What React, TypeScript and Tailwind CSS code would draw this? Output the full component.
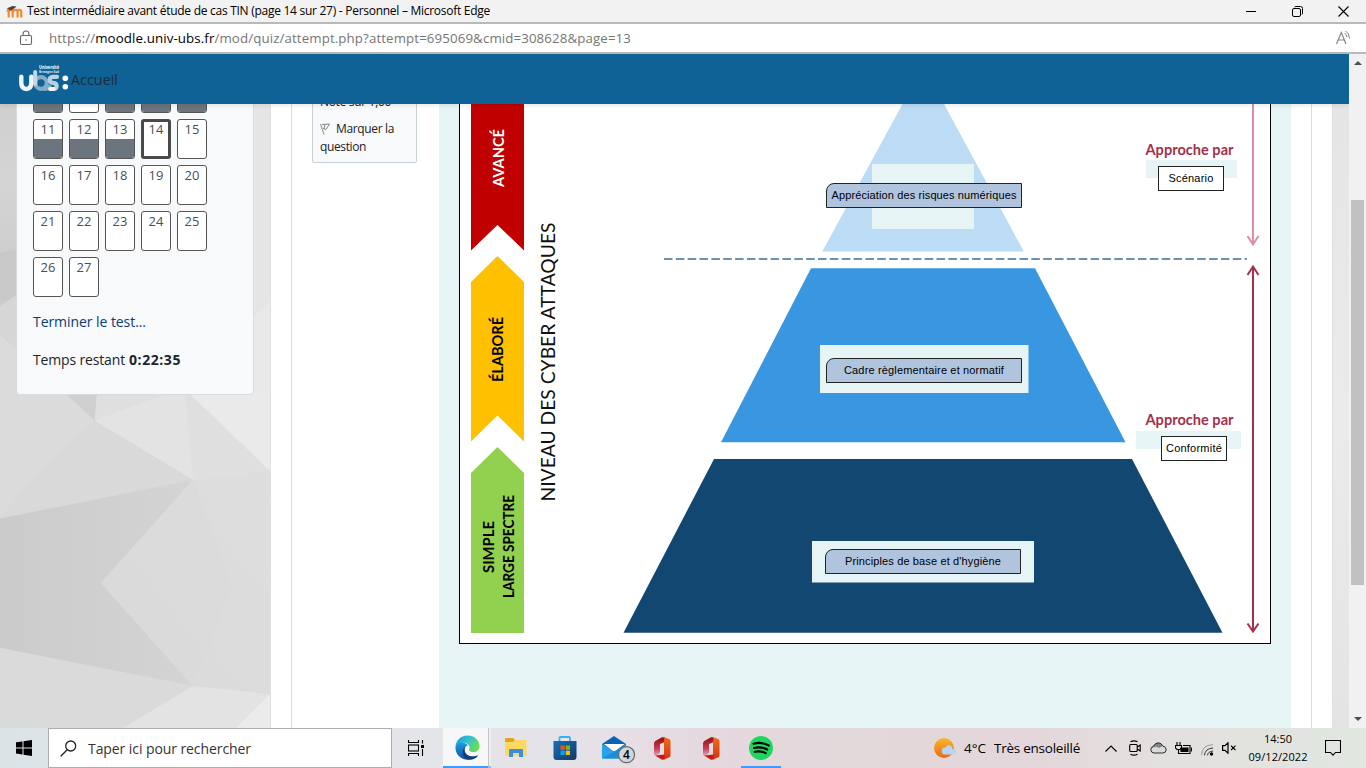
import React, { useLayoutEffect, useRef } from 'react';

const sans = "font-['Open_Sans','Noto_Sans',sans-serif]";

/** One line of text whose tracking is adjusted so that it spans `width` pixels. */
function FitText({ width, className = '', children }: { width: number; className?: string; children: React.ReactNode }) {
  const ref = useRef<HTMLSpanElement>(null);
  useLayoutEffect(() => {
    const el = ref.current;
    if (!el) return;
    el.style.letterSpacing = '0px';
    const natural = el.getBoundingClientRect().width;
    const count = (el.textContent || '').length;
    el.style.letterSpacing = `${(width - natural) / count}px`;
  }, [width]);
  return (
    <span ref={ref} className={`inline-block whitespace-nowrap ${className}`}>
      {children}
    </span>
  );
}

function TitleBar() {
  return (
    <div className="flex h-[22px] items-center bg-[#f2f2f2] pl-[6px] text-black">
      <svg width="17" height="14" viewBox="0 0 17 14" className="mt-px">
        <path d="M3 13V7.500q0-2 2-2t2 2V13M7.500 7.500q0-2 2.200-2t2.200 2V13M11.800 7.500q0-2 1.900-2t1.900 2V13" transform="translate(-.3 -.6)" fill="none" stroke="#f08a2c" strokeWidth="2.200" />
        <path d="M1 3.200L6.500 1l4 .4-3.500 3.200-3 1z" fill="#4a4542" />
        <path d="M1.500 3.500L1 7" stroke="#8b7a6b" strokeWidth=".8" />
      </svg>
      <FitText width={463} className="ml-[4px] text-[12px] leading-[22px]">
        Test intermédiaire avant étude de cas TIN (page 14 sur 27) - Personnel – Microsoft Edge
      </FitText>
      <div className="ml-auto flex items-center pr-[17px]">
        <svg width="10" height="10" viewBox="0 0 10 10"><path d="M0 5.500h10" stroke="#000" /></svg>
        <svg width="11" height="11" viewBox="0 0 11 11" className="ml-[36px]" fill="none" stroke="#000">
          <rect x=".5" y="2.500" width="8" height="8" rx="1.500" />
          <path d="M2.500 1Q3 .5 4 .5h4.500q2 0 2 2V7q0 1-.5 1.500" />
        </svg>
        <svg width="11" height="11" viewBox="0 0 11 11" className="ml-[35px]"><path d="M.5.5l10 10M10.500.5l-10 10" stroke="#000" strokeWidth="1.100" /></svg>
      </div>
    </div>
  );
}

function AddressBar() {
  return (
    <div className="flex h-[32px] items-center border-y-2 border-y-[#b9b9b9] bg-white pl-[19px]">
      <svg width="14" height="16" viewBox="0 0 14 16" fill="none" stroke="#666" strokeWidth="1.100">
        <rect x="1.500" y="5.500" width="11" height="9" rx="1.500" />
        <path d="M4 5.500V4a3 3 0 016 0v1.500" />
        <circle cx="7" cy="10" r=".7" fill="#555" stroke="none" />
      </svg>
      <div className="ml-[16px] text-[13.300px] leading-[28px] text-[#767676]">
        <FitText width={582}>
          https://<span className="text-black">moodle.univ-ubs.fr</span>/mod/quiz/attempt.php?attempt=695069&amp;cmid=308628&amp;page=13
        </FitText>
      </div>
      <svg width="17" height="16" viewBox="0 0 17 16" className="ml-auto mr-[14px]" fill="none" stroke="#858585">
        <path d="M1.500 14L6.300 2.500 11 14M3.200 10h6.200" strokeWidth="1.200" />
        <path d="M9.500 3q2 1.300 2.300 4M10.500 1q3.700 2 4 7.500" />
      </svg>
    </div>
  );
}

function NavBar() {
  return (
    <div className="relative z-10 flex h-[50px] items-center bg-[#0f6295] pl-[18px] shadow-[0_2px_4px_rgba(0,0,0,0.08)]">
      <svg width="51" height="30" viewBox="18 64 51 30" fill="none" strokeLinecap="round">
        <path d="M49.500 86.500q-1.500 2.500-5 2.500" stroke="#82adc9" strokeWidth="4" />
        <circle cx="41" cy="83" r="5.800" stroke="#82adc9" strokeWidth="4.200" />
        <path d="M57 76.800h-4q-3.300.3-3.300 3t3.300 3.100q3.600.3 3.600 3.100T53.500 89H50" stroke="#b9d2e2" strokeWidth="4.200" />
        <path d="M53.500 89H50.500" stroke="#f3f7fa" strokeWidth="4" />
        <path d="M35.200 72v12" stroke="#c3d8e5" strokeWidth="4" />
        <path d="M21.300 76.800v6.400q.3 5.600 5 5.800 4.800-.2 5-5.800v-6.400" stroke="#eef4f8" strokeWidth="4.400" />
        <circle cx="65.300" cy="78.300" r="2.800" fill="#fff" />
        <circle cx="65.300" cy="86.700" r="2.800" fill="#fff" />
        <text x="39" y="69.300" textLength="20" lengthAdjust="spacingAndGlyphs" fontSize="5" fontWeight="700" fill="#fff" fontFamily="Open Sans">Université</text>
        <text x="39" y="72.600" textLength="20" lengthAdjust="spacingAndGlyphs" fontSize="3.500" fontWeight="700" fill="#dce9f1" fontFamily="Open Sans">Bretagne Sud</text>
      </svg>
      <FitText width={47} className="ml-[2px] pt-px text-[14.300px] text-[#1d2b36]">Accueil</FitText>
    </div>
  );
}

function PolygonBackdrop() {
  return (
    <svg width="270" height="624" viewBox="0 104 270 624" className="absolute left-0 top-0">
      <defs>
        <linearGradient id="dark" x1="0" y1="0" x2="1" y2="0"><stop stopColor="#cbcbcb" /><stop offset="1" stopColor="#d4d4d4" /></linearGradient>
        <linearGradient id="strip" x1="0" y1="0" x2="0" y2="1"><stop stopColor="#cfcfcf" /><stop offset=".5" stopColor="#d5d5d5" /><stop offset="1" stopColor="#cecece" /></linearGradient>
        <linearGradient id="light" x1="0" y1="1" x2="1" y2="0"><stop stopColor="#dadada" /><stop offset="1" stopColor="#dedede" /></linearGradient>
      </defs>
      <rect y="104" width="270" height="624" fill="#dbdbdb" />
      <path d="M0 104h60v149H0z" fill="url(#strip)" />
      <path d="M0 253l17-4v46L0 306z" fill="#c9c9c9" />
      <path d="M0 306l17-11v55L0 335z" fill="#d6d6d6" />
      <path d="M240 104h30v197l-30 28z" fill="#e5e5e5" />
      <path d="M240 329l30-28v93h-30z" fill="#e9e9e9" />
      <path d="M66 394h31l-2 27z" fill="#d0d0d0" />
      <path d="M97 394h95l78 77-77 9-98-59z" fill="#e3e3e3" />
      <path d="M97 394h70l-45 16-27 11z" fill="#dfdfdf" />
      <path d="M185 394h7l78 77-77 9z" fill="#dfdfdf" />
      <path d="M190 394h80v77z" fill="#eaeaea" />
      <path d="M95 421l98 59L0 518.500l35-43z" fill="#d9d9d9" />
      <path d="M0 518.500L193 480l-92 103 92 103L0 648z" fill="url(#dark)" />
      <path d="M193 480l77-9v223l-77-8-92-103z" fill="url(#light)" />
      <path d="M193 480l39 105-39 101-92-103z" fill="#d9d9d9" opacity=".5" />
      <path d="M0 648l193 38-70 42H0z" fill="#dadada" />
      <path d="M193 686l77 8v34H123z" fill="#e3e3e3" />
      <path d="M270 694v34h-34z" fill="#ebebeb" />
    </svg>
  );
}

function QuizButton({ n }: { n: number }) {
  const answered = n <= 13 && n !== 7;
  const current = n === 14;
  return (
    <div
      className={`flex h-[40px] w-[30px] flex-col overflow-hidden rounded-[3px] bg-white ${
        current ? 'border-[3px] border-[#4a4a4a]' : 'border border-[#555]'
      }`}
    >
      <div className={`flex h-[19px] shrink-0 justify-center text-[13px] leading-[19px] text-[#495057] ${current ? '-mt-[2px]' : ''}`}>
        {n > 10 && <FitText width={15}>{n}</FitText>}
      </div>
      {answered && <div className="flex-1 bg-[#6c757d]" />}
    </div>
  );
}

function Sidebar() {
  const numbers = Array.from({ length: 22 }, (_, i) => i + 6);
  return (
    <aside className="relative w-[271px] shrink-0 border-r border-[#dcdedf]">
      <PolygonBackdrop />
      <div className="relative -mt-[40px] ml-[16px] h-[331px] w-[238px] rounded-[4px] border border-[#d9dcdf] bg-[#f8f9fb] pl-[16px] pt-[8px]">
        <div className="grid grid-cols-[repeat(5,30px)] gap-[6px]">
          {numbers.map((n) => <QuizButton key={n} n={n} />)}
        </div>
        <div className="mt-[14px] text-[14px] leading-[22px] text-[#0c3b78]"><FitText width={113}>Terminer le test...</FitText></div>
        <div className="mt-[16px] flex text-[14px] leading-[22px] text-[#212529]">
          <FitText width={92}>Temps restant</FitText>
          <FitText width={52} className="ml-[4px] font-bold">0:22:35</FitText>
        </div>
      </div>
    </aside>
  );
}

function Diagram() {
  const label = { fontFamily: 'Lato, sans-serif', fontWeight: 700, lengthAdjust: 'spacingAndGlyphs' as const };
  return (
    <svg width="810" height="539" viewBox="460 104 810 539" className="block">
      <path d="M471 100h53v150.500L497.500 225 471 250.500z" fill="#c00000" />
      <path d="M497.500 256L524 282v159.500l-26.500-26-26.500 26V282z" fill="#ffc000" />
      <path d="M497.500 447L524 473v160h-53V473z" fill="#92d050" />
      <text {...label} transform="translate(503.500 187) rotate(-90)" textLength="58" fontSize="14.500" fill="#fff">AVANCÉ</text>
      <text {...label} transform="translate(503.200 382) rotate(-90)" textLength="65" fontSize="14.500">ÉLABORÉ</text>
      <text {...label} transform="translate(493.700 573) rotate(-90)" textLength="52" fontSize="15">SIMPLE</text>
      <text {...label} transform="translate(513.700 598) rotate(-90)" textLength="103" fontSize="14.500">LARGE SPECTRE</text>
      <text {...label} fontWeight={400} transform="translate(555 501.500) rotate(-90)" textLength="279" fontSize="20" fill="#111">NIVEAU DES CYBER ATTAQUES</text>

      <path d="M902.500 104h41.500L1023.800 251.500H822.300z" fill="#bcdcf5" />
      <path d="M811 268.300h224l90.500 174H721z" fill="#3996e1" />
      <path d="M714 459h418l90.500 173.700h-599z" fill="#124772" />
      <path d="M664 259h583" stroke="#6c91b1" strokeWidth="2" strokeDasharray="8.500 3.350" />

      <g fill="#e6f4f6">
        <path d="M872 164h102v65H872zM820 345h208.500v48H820zM812 541h222v41.500H812zM1146 160h91v18h-91zM1136 431h105v18h-105z" />
      </g>
      <g fill="none" strokeWidth="2">
        <path d="M1253 104v140M1247.500 236l5.500 8.500 5.500-8.500" stroke="#dc90a2" />
        <path d="M1253 267v364M1247.500 275l5.500-8.500 5.500 8.500M1247.500 623.500l5.500 8 5.500-8" stroke="#a5304c" />
      </g>
      <text {...label} x="1145.500" y="155" textLength="88" fontSize="14.500" fill="#a5304c">Approche par</text>
      <text {...label} x="1145.500" y="425" textLength="88" fontSize="14.500" fill="#a5304c">Approche par</text>
    </svg>
  );
}

const chip = "absolute flex h-[25px] items-center justify-center border border-[#222] font-['Liberation_Sans',sans-serif] text-[11px] leading-none text-black";

function DropCanvas() {
  return (
    <div className="relative h-[540px] w-[812px] border-x border-b border-black bg-white">
      <Diagram />
      <div className={`${chip} left-[366px] top-[79px] w-[196px] rounded-tl-[8px] bg-[#b0c4de]`}><FitText width={185}>Appréciation des risques numériques</FitText></div>
      <div className={`${chip} left-[366px] top-[254px] w-[196px] rounded-tl-[8px] bg-[#b0c4de]`}><FitText width={160}>Cadre règlementaire et normatif</FitText></div>
      <div className={`${chip} left-[365px] top-[445px] w-[196px] rounded-tl-[8px] bg-[#b0c4de]`}><FitText width={156}>Principles de base et d'hygiène</FitText></div>
      <div className={`${chip} left-[698px] top-[62px] w-[66px] bg-white`}><FitText width={45}>Scénario</FitText></div>
      <div className={`${chip} left-[701px] top-[332px] w-[66px] bg-white`}><FitText width={56}>Conformité</FitText></div>
    </div>
  );
}

function QuestionInfo() {
  return (
    <div className="-mt-[20px] ml-[20px] h-[79px] w-[105px] shrink-0 rounded-[2px] border border-[#cad0d7] bg-[#f8f9fa] pl-[7px] pt-[8px] text-[12px] leading-[18px] text-[#1d2125]">
      <div><FitText width={71}>Note sur 1,00</FitText></div>
      <div className="mt-[9px] flex items-center">
        <svg width="10" height="12" viewBox="0 0 10 12" fill="none" stroke="#888" className="mr-[6px]"><path d="M.5 1l3.500 10.500M2 1.500l7.500-.5L6 6.500l-3-1M5 1.200L4 6" /></svg>
        <FitText width={58}>Marquer la</FitText>
      </div>
      <FitText width={46}>question</FitText>
    </div>
  );
}

function ScrollBar() {
  return (
    <div className="flex w-[17px] shrink-0 flex-col items-center bg-[#f1f1f1]">
      <svg width="8" height="4" viewBox="0 0 8 4" className="mt-[7px]"><path d="M0 4l4-4 4 4z" fill="#505050" /></svg>
      <div className="mt-[135px] h-[385px] w-[13px] bg-[#c1c1c1]" />
      <svg width="8" height="4" viewBox="0 0 8 4" className="mb-[7px] mt-auto"><path d="M0 0l4 4 4-4z" fill="#505050" /></svg>
    </div>
  );
}

function OfficeIcon() {
  return (
    <svg width="18" height="23" viewBox="0 0 18 23">
      <defs>
        <linearGradient id="of1" x1="0" y1="0" x2="0" y2="1"><stop stopColor="#8f1010" /><stop offset=".6" stopColor="#c53b50" /><stop offset="1" stopColor="#e6a0ba" /></linearGradient>
        <linearGradient id="of2" x1="0" y1="0" x2="0" y2="1"><stop stopColor="#ef6c1a" /><stop offset="1" stopColor="#d8320f" /></linearGradient>
      </defs>
      <path d="M1 6.500Q1 5 2.300 4L9 .3l3 .2v4.500L7 7v8q0 1.500-1.500 2.300L2 18.500Q1 18 1 16.500z" fill="url(#of1)" />
      <path d="M11.500.3L16 2q1.500.5 1.500 2v14.500q0 1.500-1.500 2L11 22.500V4.500z" fill="url(#of2)" />
      <path d="M2 18.500l9.500-1v5L9 22.700z" fill="#c71b12" />
    </svg>
  );
}

function EdgeIcon() {
  return (
    <svg width="25" height="25" viewBox="0 0 25 25">
      <defs>
        <linearGradient id="eg" x1="0" y1="0" x2="1" y2=".4"><stop stopColor="#1b96df" /><stop offset=".55" stopColor="#35bfcf" /><stop offset="1" stopColor="#66dc5a" /></linearGradient>
        <linearGradient id="eb" x1="0" y1="0" x2="0" y2="1"><stop stopColor="#1e9be0" /><stop offset="1" stopColor="#0b55a6" /></linearGradient>
      </defs>
      <path d="M.5 12.500C.5 5.500 5.500.5 12.500.5s12 5 12 10.500c0 4-3 6-6 6-4 0-5-2-4-3.500C15.500 9 9 6 4.500 9 2 10.500.5 12.500.5 12.500z" fill="url(#eg)" />
      <path d="M.5 12.500C1.500 8 6 6.500 9.500 8c2.500 1 3.500 2.500 3.500 2.500-3 .5-4 3-3.500 5.500C10.500 20.500 15 22 19 21.500c2 0 3.500-1 4-1-2.500 3.500-6.500 4.200-10 4.200C5.500 24.700.3 19 .5 12.500z" fill="url(#eb)" />
      <path d="M10.500 11.500c-2.500 4.500.5 10 7 10 2.500 0 5-1.300 5.500-1-2.500 3.500-7 4.500-10 4-6-1-7.500-9.500-2.500-13z" fill="#103f7d" />
    </svg>
  );
}

function TaskBar() {
  return (
    <footer className="flex h-[40px] items-center bg-[linear-gradient(90deg,#dce3e7_0%,#e4e6e9_33%,#e5e2e7_43%,#e5d8df_52%,#e3d8da_63%,#e4d6da_75%,#e3dfde_84%,#e1e7e1_100%)] text-black">
      <svg width="16" height="16" viewBox="0 0 16 16" className="ml-[16px]"><path d="M0 2.300l6.500-.9v6H0zM7.500 1.200L16 0v7.400H7.500zM0 8.400h6.500v6.100L0 13.600zM7.500 8.400H16V16l-8.500-1.200z" /></svg>
      <div className="ml-[16px] flex h-[40px] w-[344px] items-center border border-[#a9adb0] bg-white pl-[11px]">
        <svg width="17" height="17" viewBox="0 0 17 17" fill="none" stroke="#222" strokeWidth="1.300"><circle cx="10.700" cy="6" r="5" /><path d="M7.200 9.700L.7 16.200" /></svg>
        <FitText width={163} className="ml-[11px] text-[14px] text-[#333]">Taper ici pour rechercher</FitText>
      </div>
      <svg width="16" height="16" viewBox="0 0 16 16" className="ml-[16px]" fill="none" stroke="#000" strokeWidth="1.100">
        <path d="M.5 0v2.500h10V0M.5 16v-2.500h10V16M14.500 0v3.500M14.500 9v7" /><rect x=".5" y="5" width="10" height="6" /><path d="M13 6.500h3" strokeWidth="3" />
      </svg>
      <div className="ml-[19px] flex h-[40px] w-[48px] shrink-0">
        <div className="flex w-[45px] items-center justify-center border-b-2 border-[#3f9bfd] bg-[#f7f7f8]"><div className="ml-[3px]"><EdgeIcon /></div></div>
        <div className="w-[3px] border-b-2 border-l border-b-[#7ebcfa] border-l-[#c5c5c8] bg-[#eeeef0]" />
      </div>
      <svg width="22" height="20" viewBox="0 0 22 20" className="ml-[14px]">
        <path d="M0 1q0-1 1-1h7l2 2h11v15H0z" fill="#e0a51d" /><path d="M0 4h8l2-2h11.500v16H0z" fill="#ffd864" /><path d="M4 19v-7q0-1 1-1h12q1 0 1 1v7h-4v-4H8v4z" fill="#3d8fd9" />
      </svg>
      <svg width="24" height="24" viewBox="0 0 24 24" className="ml-[26px]">
        <defs><linearGradient id="st" x1="0" y1="0" x2="1" y2="1"><stop stopColor="#1270bb" /><stop offset="1" stopColor="#183863" /></linearGradient></defs>
        <path d="M6.500 6V2q0-1 1-1h8.500q1 0 1 1v4" fill="none" stroke="#36b3ec" strokeWidth="1.800" />
        <path d="M.5 5h23v16q0 3-3 3h-17q-3 0-3-3z" fill="url(#st)" />
        <path d="M7.500 9.500h4.300v4.300H7.500z" fill="#f25022" /><path d="M12.700 9.500H17v4.300h-4.300z" fill="#7fba00" /><path d="M7.500 14.700h4.300V19H7.500z" fill="#00a4ef" /><path d="M12.700 14.700H17V19h-4.300z" fill="#ffb900" />
      </svg>
      <svg width="33" height="28" viewBox="0 0 33 28" className="ml-[25px] mt-[4px] shrink-0">
        <path d="M0 8L12 0l12 8v14H0z" fill="#0b63b5" /><path d="M2 8h20l-9.500 7z" fill="#fff" /><path d="M0 8l12 7 12-7v14.500H0z" fill="#29a3e8" /><path d="M2 8h20.500L13 15h-2z" fill="#fff" /><path d="M0 22.500L24 9v13.500z" fill="#1a8edb" />
        <circle cx="24.500" cy="18.700" r="8" fill="#d1d7da" stroke="#666" strokeWidth="1.200" />
        <text x="24.500" y="23" textAnchor="middle" fontSize="12" fontWeight="600" fontFamily="Open Sans">4</text>
      </svg>
      <div className="ml-[18px]"><OfficeIcon /></div>
      <div className="ml-[31px]"><OfficeIcon /></div>
      <div className="ml-[21px] flex h-[40px] w-[40px] items-center justify-center border-b-2 border-[#3f9bfd] pt-[2px]">
        <svg width="24" height="24" viewBox="0 0 24 24"><circle cx="12" cy="12" r="12" fill="#1ed760" /><path d="M4.500 7.800q8-2.300 15.300 1.700M5 12q7-2 13.200 1.500M5.700 15.800q6-1.500 11 1.400" fill="none" stroke="#000" strokeWidth="2.200" strokeLinecap="round" /></svg>
      </div>
      <svg width="24" height="22" viewBox="0 0 24 22" className="ml-auto shrink-0">
        <defs><linearGradient id="sun" x1="0" y1="0" x2="0" y2="1"><stop stopColor="#f6b92c" /><stop offset="1" stopColor="#ed6a13" /></linearGradient></defs>
        <circle cx="11" cy="11" r="10" fill="url(#sun)" /><path d="M12 17.500a3.500 3.500 0 01.5-7q2-3.500 5.500-1.500 1.500 1 1.500 3 3.500.3 3.500 3 0 2.500-3 2.500z" fill="#b9d4f8" />
      </svg>
      <FitText width={22} className="ml-[7px] text-[13.500px]">4°C</FitText>
      <FitText width={86} className="ml-[8px] text-[13.500px]">Très ensoleillé</FitText>
      <svg width="12" height="7" viewBox="0 0 12 7" className="ml-[25px]" fill="none" stroke="#000" strokeWidth="1.200"><path d="M.5 6.500L6 1l5.500 5.500" /></svg>
      <svg width="12" height="16" viewBox="0 0 12 16" className="ml-[12px]" fill="none" stroke="#000" strokeWidth="1.100"><rect x=".7" y="4.500" width="7.500" height="7" rx="1" /><path d="M8.200 7l3-2v6l-3-2M1.500 1.800Q5 0 8.500 1.800M1.500 14.200q3.500 1.800 7 0" /></svg>
      <svg width="17" height="12" viewBox="0 0 17 12" className="ml-[9px]">
        <path d="M4 11a3.400 3.400 0 01-.6-6.700Q5 .7 8.500.8q3 .2 4.200 3.200 3.500.6 3.500 3.700-.2 3.300-3.400 3.300z" fill="#d9d9d9" />
        <path d="M1.500 6Q2 4.500 3.400 4.300 5 .7 8.500.8q3 .2 4.200 3.200L9 6 6 4.800z" fill="#858585" />
        <path d="M4 11a3.400 3.400 0 01-.6-6.700Q5 .7 8.500.8q3 .2 4.200 3.200 3.500.6 3.500 3.700-.2 3.300-3.400 3.300z" fill="none" stroke="#2c2c2c" />
      </svg>
      <svg width="17" height="13" viewBox="0 0 17 13" className="ml-[8px]" fill="none" stroke="#000" strokeWidth="1.100"><path d="M2 0v3M5 0v3M.5 3.500h6V6l-1.500 1.500H2L.5 6zM3.500 7.500v4h11.500v-8H8" /><path d="M6 6h7v3.500H6z" fill="#000" /><path d="M16.400 5.500v4" /></svg>
      <svg width="13" height="12" viewBox="0 0 13 12" className="ml-[9px] mt-[3px]" fill="none" stroke="#333"><path d="M.5 11Q1 1 12 .7" stroke="#999" /><path d="M3.500 11.300Q4 4.500 12 4M6.500 11.300Q7 7.500 12 7" /><circle cx="10.500" cy="10" r="1.700" fill="#000" stroke="none" /></svg>
      <svg width="15" height="12" viewBox="0 0 15 12" className="ml-[8px]" fill="none" stroke="#000" strokeWidth="1.200"><path d="M.6 3.700H3L6 .8v10.400L3 8.300H.6zM9 3.700l4.500 4.500M13.500 3.700L9 8.200" /></svg>
      <div className="ml-[11px] flex w-[60px] flex-col items-center text-[11px] leading-[18px]">
        <FitText width={28}>14:50</FitText>
        <FitText width={59}>09/12/2022</FitText>
      </div>
      <svg width="16" height="16" viewBox="0 0 16 16" className="ml-[17px] mr-[25px]" fill="none" stroke="#000" strokeWidth="1.100"><path d="M.5.500h15v12h-5L8 15.200l-2.500-2.700h-5z" /></svg>
    </footer>
  );
}

export default function App() {
  return (
    <div className={`flex h-[768px] w-[1366px] flex-col overflow-hidden bg-white ${sans}`}>
      <TitleBar />
      <AddressBar />
      <div className="flex h-[674px] shrink-0">
        <div className="flex w-[1349px] flex-col overflow-hidden">
          <NavBar />
          <div className="flex h-[624px] overflow-hidden">
            <Sidebar />
            <main className="flex w-[1061px] shrink-0 px-[20px]">
              <div className="flex w-[1021px] border-x border-[#dcdedf]">
                <QuestionInfo />
                <section className="ml-[22px] w-[852px] bg-[#e6f4f6] pl-[20px]">
                  <DropCanvas />
                </section>
              </div>
            </main>
            <div className="flex-1 border-l border-[#dcdedf] bg-[linear-gradient(180deg,#e5e5e5,#ebebeb_50%,#e4e4e4)]" />
          </div>
        </div>
        <ScrollBar />
      </div>
      <TaskBar />
    </div>
  );
}
